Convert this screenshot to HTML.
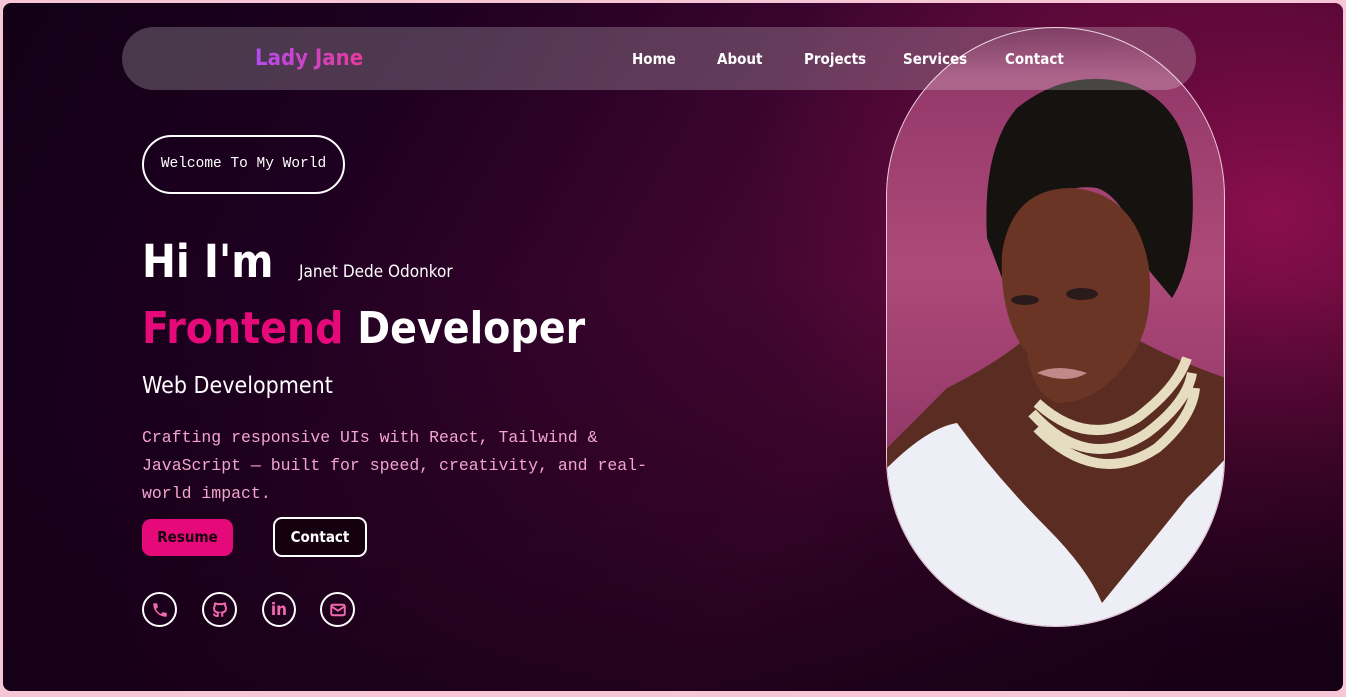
<!DOCTYPE html>
<html><head><style>
*{margin:0;padding:0;box-sizing:border-box}
html,body{width:1346px;height:697px;overflow:hidden;background:#f7c6d6}
.wrap{position:absolute;left:3px;top:3px;width:1340px;height:688px;border-radius:8px;overflow:hidden;
background:radial-gradient(ellipse 700px 560px at 1270px 210px,#8a0f4c 0%,#6a0a3e 25%,rgba(70,5,45,.0) 75%),linear-gradient(120deg,#120016 0%,#1e0020 25%,#3e0530 50%,#4a0734 62%,#2a0220 85%,#1a0018 100%);}
.bg3{position:absolute;inset:0;background:linear-gradient(180deg,rgba(0,0,0,0) 40%,rgba(20,0,20,.75) 100%);}
.sans{font-family:"DejaVu Sans Condensed","Liberation Sans",sans-serif}
.mono{font-family:"Liberation Mono","DejaVu Sans Mono",monospace}
.nav{position:absolute;left:119px;top:24px;width:1074px;height:63px;border-radius:32px;background:rgba(255,255,255,.22);z-index:5}
.logo{position:absolute;left:133px;top:19px;font-size:22px;font-weight:bold;background:linear-gradient(90deg,#b44cf0,#e83a9a);-webkit-background-clip:text;color:transparent}
.nav a{position:absolute;top:23px;color:#fff;font-size:15px;font-weight:bold;text-decoration:none}
.pill{position:absolute;left:883px;top:24px;width:339px;height:600px;border-radius:170px;border:1px solid #e8c8d8;overflow:hidden;
background:linear-gradient(180deg,rgba(160,60,110,0) 0%,#94386a 8%,#ad4a78 40%,#94386a 70%,#8a3362 100%)}
.welcome{position:absolute;left:139px;top:132px;width:203px;height:59px;border:2px solid #fff;border-radius:30px;color:#fff;font-size:14.5px;text-align:center;line-height:55px}
.t{position:absolute;color:#fff;white-space:nowrap}
.btn{position:absolute;height:37px;border-radius:9px;font-size:15px;font-weight:bold;text-align:center;line-height:36px}
.ic{position:absolute;top:589px;width:35px;height:35px;border:2px solid #fff;border-radius:50%;display:flex;align-items:center;justify-content:center}
</style></head><body>
<div class="wrap">
<div class="bg3"></div>
<div class="pill">
<svg width="339" height="600" viewBox="0 0 339 600">
<path d="M60 360 Q120 330 150 300 L230 300 Q280 330 339 350 L339 600 L0 600 L0 420 Z" fill="#5a2c22"/>
<path d="M100 210 Q95 120 130 80 Q180 40 240 55 Q300 75 305 150 Q310 230 285 270 L260 240 Q240 170 210 160 Q150 150 115 250 Z" fill="#15120f"/>
<path d="M115 225 Q125 160 185 160 Q250 165 262 240 Q268 300 240 335 Q210 375 170 375 Q145 365 140 325 Q112 290 115 225Z" fill="#6b3526"/>
<path d="M150 345 Q170 335 200 345 Q180 357 150 345Z" fill="#c08a8a"/>
<ellipse cx="138" cy="272" rx="14" ry="5" fill="#2a1a1a"/><ellipse cx="195" cy="266" rx="16" ry="6" fill="#2a1a1a"/>
<path d="M150 375 Q200 420 250 390 Q290 360 300 330 M145 385 Q200 445 260 405 Q300 375 305 345 M150 400 Q210 460 270 420 Q305 390 308 360" stroke="#e6dcc0" stroke-width="10" fill="none"/>
<path d="M0 440 Q40 400 70 395 Q110 450 160 500 Q200 540 215 575 Q260 520 300 470 Q330 440 339 430 L339 600 L0 600Z" fill="#eeeef6"/>
</svg>
</div>
<div class="nav sans">
<div class="logo">Lady Jane</div>
<a style="left:510px">Home</a><a style="left:595px">About</a><a style="left:682px">Projects</a><a style="left:781px">Services</a><a style="left:883px">Contact</a>
</div>
<div class="welcome mono">Welcome To My World</div>
<div class="t sans" style="left:139px;top:232px;font-size:45px;font-weight:bold">Hi I'm</div>
<div class="t sans" style="left:296px;top:259px;font-size:17px">Janet Dede Odonkor</div>
<div class="t sans" style="left:139px;top:300px;font-size:44px;font-weight:bold"><span style="color:#e6097a">Frontend</span> Developer</div>
<div class="t sans" style="left:139px;top:370px;font-size:23px">Web Development</div>
<div class="t mono" style="left:139px;top:421px;font-size:16.5px;line-height:28px;color:#f2a4cf;white-space:normal;width:520px">Crafting responsive UIs with React, Tailwind &amp; JavaScript — built for speed, creativity, and real-world impact.</div>
<div class="btn sans" style="left:139px;top:516px;width:91px;background:#e6097a;color:#1a0010">Resume</div>
<div class="btn sans" style="left:270px;top:514px;width:94px;height:40px;border:2px solid #fff;color:#fff;background:#14000f">Contact</div>
<div class="ic" style="left:139px"><svg width="18" height="18" viewBox="0 0 24 24"><path fill="#f06aac" d="M6.6 10.8a15 15 0 0 0 6.6 6.6l2.2-2.2a1 1 0 0 1 1-.25 11 11 0 0 0 3.6.6 1 1 0 0 1 1 1V20a1 1 0 0 1-1 1A17 17 0 0 1 3 4a1 1 0 0 1 1-1h3.5a1 1 0 0 1 1 1c0 1.25.2 2.45.6 3.6a1 1 0 0 1-.25 1z"/></svg></div>
<div class="ic" style="left:199px"><svg width="18" height="18" viewBox="0 0 24 24"><path fill="none" stroke="#f06aac" stroke-width="2.6" d="M9 20c-4 1-4-2-6-2.5M15 21v-3.5c0-1 .1-1.4-.5-2 2.8-.3 5.5-1.4 5.5-6a4.6 4.6 0 0 0-1.3-3.2 4.2 4.2 0 0 0-.1-3.2s-1.1-.3-3.5 1.3a12 12 0 0 0-6.2 0C6.5 2.8 5.4 3.1 5.4 3.1a4.2 4.2 0 0 0-.1 3.2A4.6 4.6 0 0 0 4 9.5c0 4.6 2.7 5.7 5.5 6-.6.6-.6 1.2-.5 2V21"/></svg></div>
<div class="ic" style="left:259px;width:34px"><span class="sans" style="color:#f06aac;font-weight:bold;font-size:17px">in</span></div>
<div class="ic" style="left:317px"><svg width="18" height="18" viewBox="0 0 24 24"><rect x="3" y="5" width="18" height="14" rx="2" fill="none" stroke="#f06aac" stroke-width="2.6"/><path d="M3 7l9 6 9-6" fill="none" stroke="#f06aac" stroke-width="2.6"/></svg></div>
</div>
</body></html>
